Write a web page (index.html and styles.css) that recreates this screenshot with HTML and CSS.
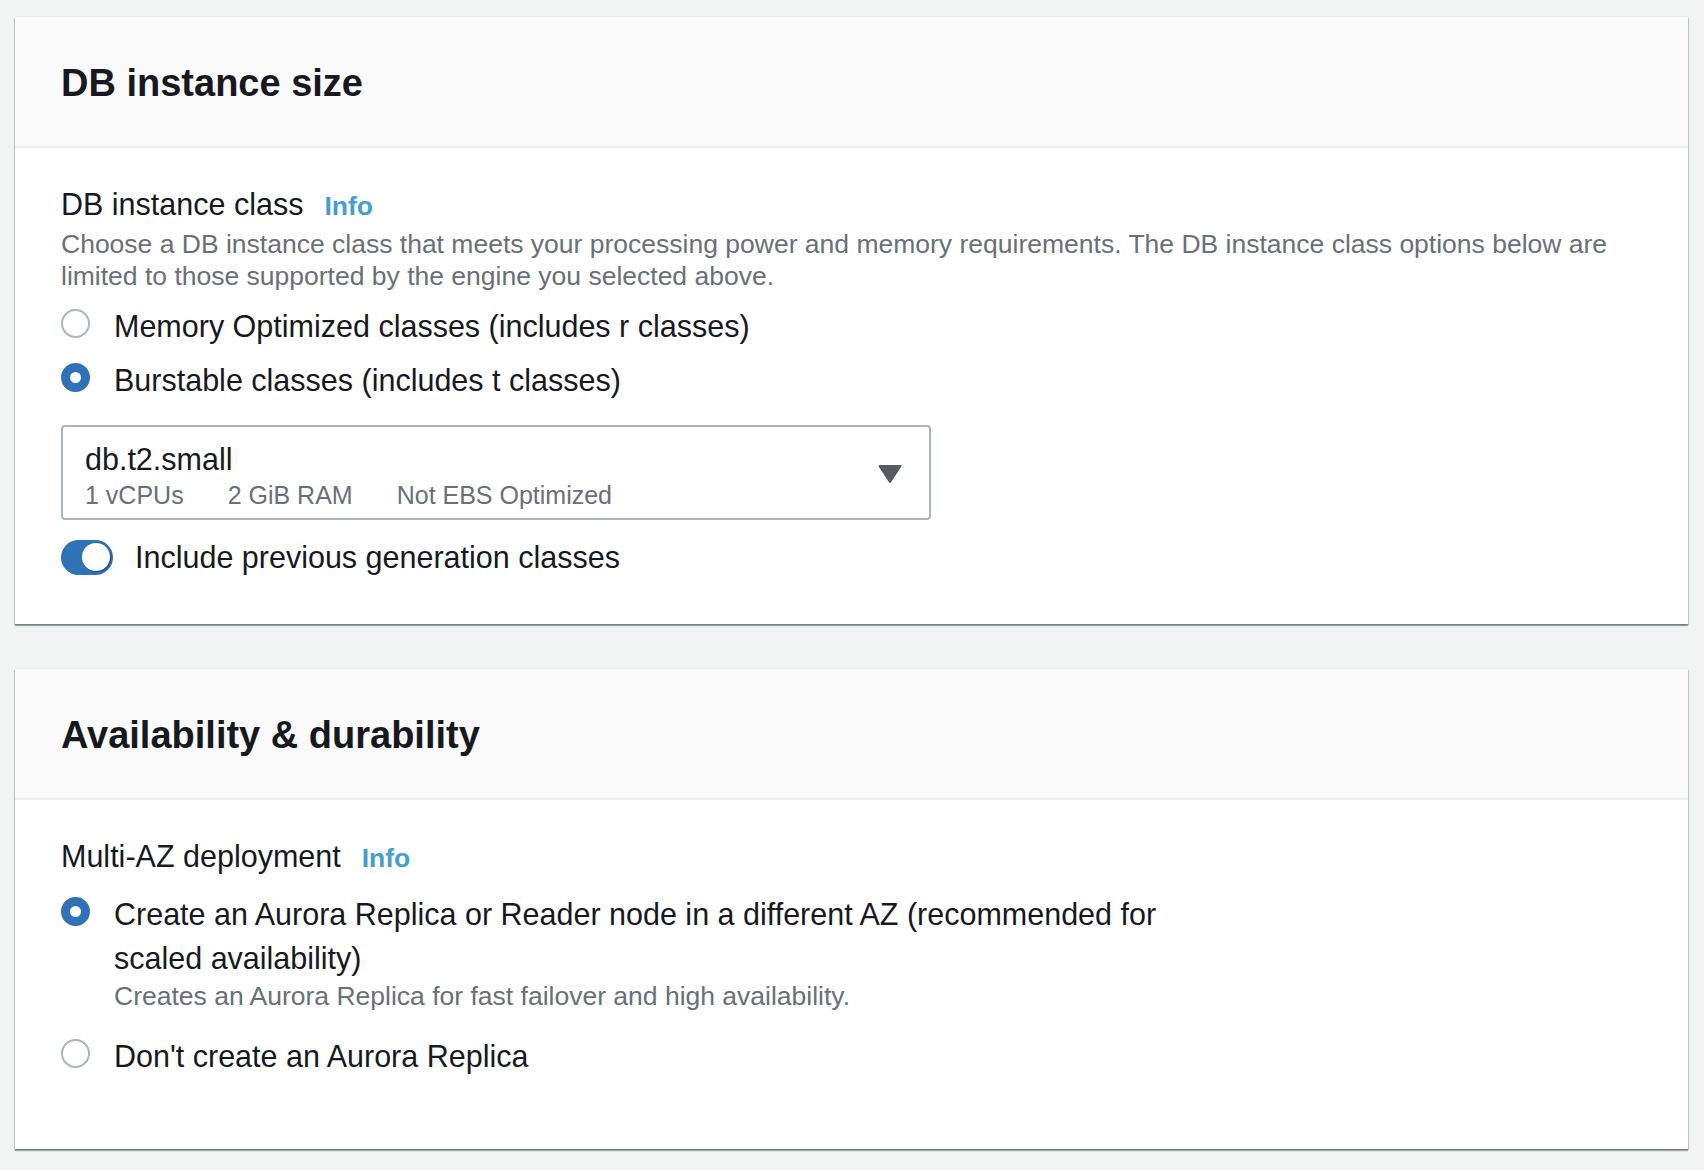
FILE: index.html
```html
<!DOCTYPE html>
<html lang="en">
<head>
<meta charset="utf-8">
<title>DB instance size</title>
<link rel="stylesheet" href="styles.css">
</head>
<body>
<main class="page">
  <section class="card">
    <header class="card-header">
      <h2 class="card-title">DB instance size</h2>
    </header>
    <div class="card-body">
      <div class="field-label">
        <span class="label">DB instance class</span>
        <a class="info">Info</a>
      </div>
      <p class="desc">Choose a DB instance class that meets your processing power and memory requirements. The DB instance class options below are limited to those supported by the engine you selected above.</p>
      <div class="radio-group">
        <div class="radio-row">
          <span class="radio"></span>
          <span class="radio-text">Memory Optimized classes (includes r classes)</span>
        </div>
        <div class="radio-row">
          <span class="radio checked"></span>
          <span class="radio-text">Burstable classes (includes t classes)</span>
        </div>
      </div>
      <div class="select">
        <div class="select-value">
          <div class="select-main">db.t2.small</div>
          <div class="select-tags">
            <span>1 vCPUs</span>
            <span>2 GiB RAM</span>
            <span>Not EBS Optimized</span>
          </div>
        </div>
        <svg class="caret" width="24" height="18" viewBox="0 0 24 18"><path d="M1.5 1 H22.5 L12 17 Z" fill="#545b64" stroke="#545b64" stroke-width="2" stroke-linejoin="round"/></svg>
      </div>
      <div class="toggle-row">
        <span class="toggle"><span class="knob"></span></span>
        <span class="toggle-text">Include previous generation classes</span>
      </div>
    </div>
  </section>

  <section class="card">
    <header class="card-header">
      <h2 class="card-title">Availability &amp; durability</h2>
    </header>
    <div class="card-body card-body-last">
      <div class="field-label">
        <span class="label">Multi-AZ deployment</span>
        <a class="info">Info</a>
      </div>
      <div class="radio-group radio-group-az">
        <div class="radio-row">
          <span class="radio checked"></span>
          <span class="radio-text wrap">Create an Aurora Replica or Reader node in a different AZ (recommended for scaled availability)
            <span class="radio-desc">Creates an Aurora Replica for fast failover and high availability.</span>
          </span>
        </div>
        <div class="radio-row">
          <span class="radio"></span>
          <span class="radio-text">Don't create an Aurora Replica</span>
        </div>
      </div>
    </div>
  </section>
</main>
</body>
</html>
```

FILE: styles.css
```css
html, body {
  margin: 0;
  padding: 0;
}

body {
  background: #f2f3f3;
  font-family: "Liberation Sans", Arial, sans-serif;
  color: #16191f;
}

.page {
  padding: 17px 16px 20px 15px;
  display: flex;
  flex-direction: column;
  gap: 45px;
}

.card {
  background: #fff;
  box-shadow: 0 2px 1px 0 rgba(0, 28, 36, 0.35), 1px 1px 1px 0 rgba(0, 28, 36, 0.15), -1px 1px 1px 0 rgba(0, 28, 36, 0.15), 0 -1px 0 0 #eaeded;
}

.card-header {
  background: #fafafa;
  border-bottom: 2px solid #eaeded;
  padding: 44px 46px 41px 46px;
}

.card-title {
  margin: 0;
  font-size: 38px;
  line-height: 44px;
  font-weight: 700;
  color: #16191f;
}

.card-body {
  padding: 38px 46px 45px 46px;
}

.card-body-last {
  padding-bottom: 71px;
}

.field-label {
  display: flex;
  align-items: baseline;
  gap: 21px;
  font-size: 30.5px;
  line-height: 36px;
}

.info {
  font-size: 26.5px;
  font-weight: 700;
  color: #43a0cd;
}

.desc {
  margin: 4px 0 0 0;
  font-size: 26.5px;
  line-height: 32px;
  color: #687078;
}

.radio-group {
  margin-top: 12px;
  display: flex;
  flex-direction: column;
  gap: 10px;
}

.radio-group-az {
  margin-top: 16px;
}

.radio-row {
  display: flex;
  align-items: flex-start;
  gap: 24px;
}

.radio {
  flex: none;
  width: 29px;
  height: 29px;
  margin-top: 5px;
  box-sizing: border-box;
  border-radius: 50%;
  border: 2.5px solid #aab7b8;
  background: #fff;
}

.radio.checked {
  border: 9px solid #2f72b8;
}

.radio-text {
  font-size: 30.5px;
  line-height: 44px;
  color: #16191f;
}

.radio-text.wrap {
  max-width: 1110px;
}

.radio-desc {
  display: block;
  font-size: 26.5px;
  line-height: 32px;
  color: #687078;
  margin-bottom: 12px;
}

.select {
  margin-top: 23px;
  width: 870px;
  height: 95px;
  box-sizing: border-box;
  border: 2px solid #aab7b8;
  border-radius: 4px;
  padding: 0 27px 0 22px;
  display: flex;
  align-items: center;
  justify-content: space-between;
}

.select-value {
  display: flex;
  flex-direction: column;
  padding-top: 7px;
}

.select-main {
  font-size: 30.5px;
  line-height: 36px;
  color: #16191f;
}

.select-tags {
  margin-top: 2px;
  display: flex;
  gap: 44px;
  font-size: 25px;
  line-height: 32px;
  color: #687078;
}

.caret {
  flex: none;
  margin-top: 3px;
}

.toggle-row {
  margin-top: 15px;
  display: flex;
  align-items: center;
  gap: 22px;
}

.toggle {
  flex: none;
  width: 52px;
  height: 35px;
  box-sizing: border-box;
  border-radius: 18px;
  background: #2f72b8;
  display: flex;
  align-items: center;
  justify-content: flex-end;
  padding: 0 3px;
}

.knob {
  width: 28px;
  height: 28px;
  border-radius: 50%;
  background: #fff;
  box-shadow: 1px 1px 1px rgba(0, 28, 36, 0.45);
}

.toggle-text {
  font-size: 30.5px;
  line-height: 44px;
  color: #16191f;
}
```
